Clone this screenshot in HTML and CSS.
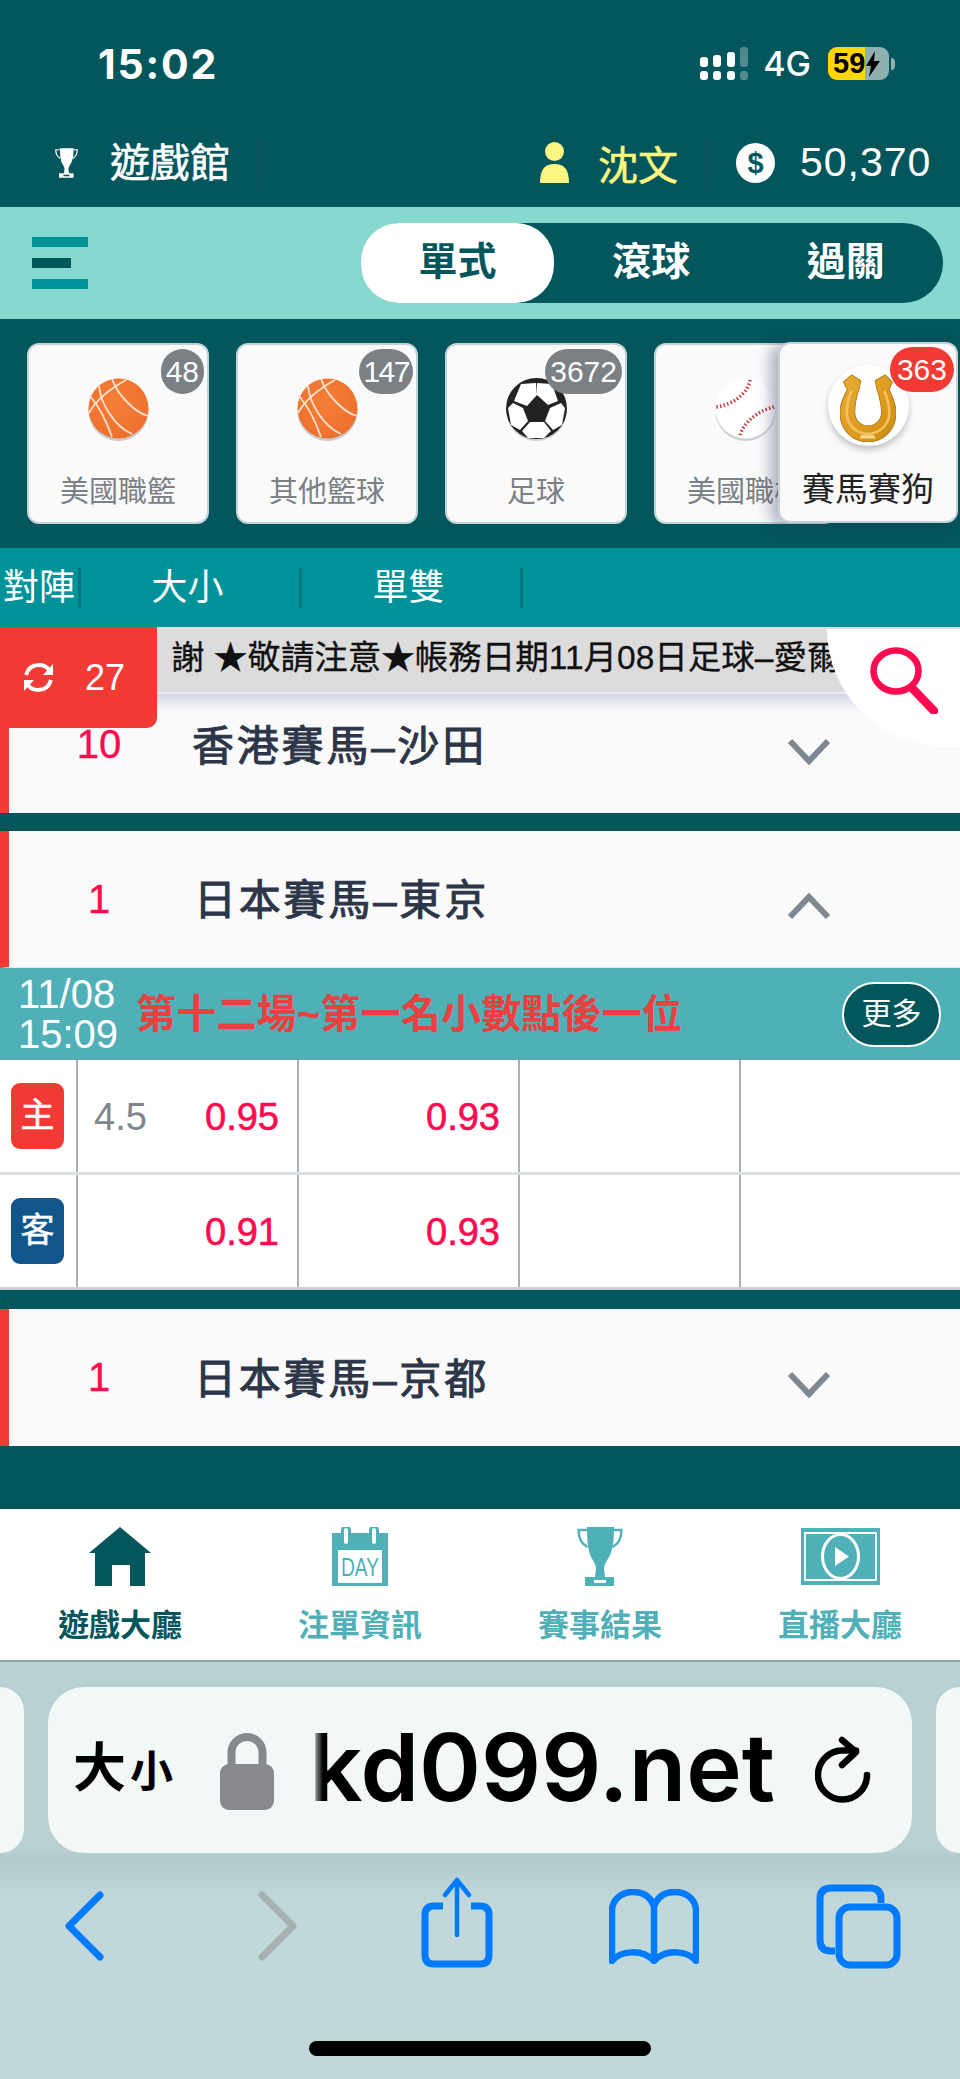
FILE: index.html
```html
<!DOCTYPE html>
<html lang="zh-Hant">
<head>
    <meta charset="UTF-8">
    <meta name="viewport" content="width=device-width, initial-scale=1.0">
    <title>遊戲館</title>
    <link rel="stylesheet" href="styles.css">
</head>
<body>
    <svg class="defs" width="0" height="0">
        <defs>
            <radialGradient id="orange" cx="45%" cy="40%" r="65%">
                <stop offset="0" stop-color="#f58038"/>
                <stop offset="1" stop-color="#ed6f2c"/>
            </radialGradient>
            <linearGradient id="gold" x1="0" y1="0" x2="1" y2="1">
                <stop offset="0" stop-color="#e9ad3a"/>
                <stop offset=".6" stop-color="#dc9a1e"/>
                <stop offset="1" stop-color="#c98912"/>
            </linearGradient>
            <symbol id="basketball" viewBox="0 0 61 64">
                <ellipse cx="30.5" cy="33" rx="30" ry="30" fill="#8d9296" opacity=".45"/>
                <circle cx="30.5" cy="30.5" r="30" fill="url(#orange)"/>
                <g fill="none" stroke="#fbe3d3" stroke-width="1.8">
                    <path d="M24 1c6 17 24 34 36 37"/>
                    <path d="M2 18c8 9 16 24 22 41"/>
                    <path d="M38 2C20 12 8 22 1 35"/>
                    <path d="M11 8c2 18 15 40 33 48"/>
                </g>
            </symbol>
            <symbol id="cup" viewBox="0 0 46 59">
                <path fill-rule="evenodd" d="M10 0h27c0 14-1 23-5 30-3 5-5 8-5 12l1 8h9v9H8v-9h10l1-8c0-4-2-7-5-12C11 23 10 14 10 0zM17 53v3h12v-3z"/>
                <path fill="none" stroke="currentColor" stroke-width="2.4" d="M10 3H1.5c0 9 3 14 9 17M36 3h8.5c0 9-3 14-9 17"/>
            </symbol>
        </defs>
    </svg>

    <!-- 狀態列 -->
    <div class="status-bar">
        <span class="clock">15:02</span>
        <div class="status-right">
            <svg class="signal" width="48" height="33" viewBox="0 0 48 33">
                <g fill="#fff">
                    <rect x="0" y="10" width="8" height="10" rx="3"/>
                    <rect x="0" y="24" width="8" height="9" rx="3"/>
                    <rect x="13" y="8" width="8" height="12" rx="3"/>
                    <rect x="13" y="24" width="8" height="9" rx="3"/>
                    <rect x="27" y="5" width="8" height="15" rx="3"/>
                    <rect x="27" y="24" width="8" height="9" rx="3"/>
                </g>
                <g fill="#fff" opacity=".3">
                    <rect x="40" y="0" width="8" height="20" rx="3"/>
                    <rect x="40" y="24" width="8" height="9" rx="3"/>
                </g>
            </svg>
            <span class="net">4G</span>
            <div class="battery">
                <span>59</span>
                <svg width="14" height="26" viewBox="0 0 14 26"><path d="M9 0 0 15h5l-2 11 11-16H8z"/></svg>
            </div>
            <i class="battery-nub"></i>
        </div>
    </div>

    <!-- 會員列 -->
    <div class="user-bar">
        <svg class="hall-icon" width="23" height="30"><use href="#cup"/></svg>
        <span class="hall-name">遊戲館</span>
        <i class="bar-line"></i>
        <svg class="person" width="29" height="41" viewBox="0 0 29 41">
            <ellipse cx="14.5" cy="9.5" rx="9.5" ry="9.5"/>
            <path d="M0 41c0-14 5-19 14.5-19S29 27 29 41z"/>
        </svg>
        <span class="user-name">沈文</span>
        <i class="bar-line line-money"></i>
        <span class="coin">$</span>
        <span class="money">50,370</span>
    </div>

    <!-- 玩法切換 -->
    <div class="mode-bar">
        <div class="burger"><i></i><i class="short"></i><i></i></div>
        <div class="mode-tabs">
            <span class="mode-tab active">單式</span>
            <span class="mode-tab">滾球</span>
            <span class="mode-tab">過關</span>
        </div>
    </div>

    <!-- 球種 -->
    <div class="sports">
        <div class="sport-card">
            <span class="count">48</span>
            <svg class="ball" width="61" height="64"><use href="#basketball"/></svg>
            <span class="sport-name">美國職籃</span>
        </div>
        <div class="sport-card">
            <span class="count tight">147</span>
            <svg class="ball" width="61" height="64"><use href="#basketball"/></svg>
            <span class="sport-name">其他籃球</span>
        </div>
        <div class="sport-card">
            <svg class="ball" width="61" height="64" viewBox="0 0 61 64">
                <ellipse cx="30.5" cy="33" rx="30" ry="30" fill="#8d9296" opacity=".4"/>
                <circle cx="30.5" cy="30.5" r="30.5" fill="#222"/>
                <g fill="#fff">
                    <path d="M15 6l15-1 1 12-10 11-13-5z"/>
                    <path d="M31 5l15 1 6 17-10 4-11-10z"/>
                    <path d="M17 30l5 13-8 9-9-5-3-17 5-5z"/>
                    <path d="M44 30l11-5 4 5-3 17-9 5-8-9z"/>
                    <path d="M24 44h14l7 9-7 7H22l-6-7z"/>
                </g>
            </svg>
            <span class="count">3672</span>
            <span class="sport-name">足球</span>
        </div>
        <div class="sport-card">
            <svg class="ball" width="61" height="64" viewBox="0 0 61 64">
                <ellipse cx="30.5" cy="33" rx="30" ry="30" fill="#8d9296" opacity=".4"/>
                <circle cx="30.5" cy="30.5" r="30" fill="#fff"/>
                <g fill="none" stroke="#c8363f" stroke-width="3.5" stroke-dasharray="1.5 2.2">
                    <path d="M35 2C33 15 18 27 1 29"/>
                    <path d="M59 29C42 33 28 45 25 58"/>
                </g>
            </svg>
            <span class="sport-name">美國職棒</span>
        </div>
    </div>

    <div class="sport-card pinned">
        <span class="count hot">363</span>
        <div class="shoe-round">
            <svg width="56" height="68" viewBox="0 0 167 202">
                <path fill="url(#gold)" stroke="#b87d12" stroke-width="3" d="M35 2 62 20 57 44C48 70 44 90 44 112 44 138 62 154 83 154 106 154 124 138 124 112 124 90 118 70 110 44L105 20 135 2 156 24 146 46C158 70 167 90 167 115 167 165 130 202 83 202 38 202 0 165 0 115 0 90 10 70 22 46L10 24z"/>
                <path fill="none" stroke="#f2c25e" stroke-width="8" d="M34 50C24 74 20 92 20 115 20 150 48 178 83 178 118 178 147 150 147 115 147 92 142 74 132 50"/>
                <path fill="#f7d98c" d="M62 182h40l4 10H60z"/>
            </svg>
        </div>
        <span class="sport-name">賽馬賽狗</span>
    </div>

    <!-- 欄位標題 -->
    <div class="col-head">
        <span class="col-a">對陣</span>
        <span class="col-b">大小</span>
        <span class="col-b">單雙</span>
    </div>

    <!-- 跑馬燈 -->
    <div class="notice">謝 ★敬請注意★帳務日期11月08日足球–愛爾</div>
    <div class="refresh">
        <svg width="31" height="31" viewBox="0 0 31 31" fill="none" stroke="#fff" stroke-width="4">
            <path d="M3 13C5 6 10 3 16 3c4 0 8 2 10 5"/>
            <path d="M28 18c-2 7-7 10-13 10-4 0-8-2-10-5"/>
            <path fill="#fff" stroke="none" d="M30 2v11H20zM1 29V18h10z"/>
        </svg>
        <span>27</span>
    </div>
    <div class="search">
        <svg width="68" height="67" viewBox="0 0 68 67" fill="none" stroke="#ff0a50" stroke-linecap="round">
            <ellipse cx="26" cy="24" rx="22.5" ry="20.5" stroke-width="6.5"/>
            <path d="M42 41l22 23" stroke-width="8.5"/>
        </svg>
    </div>

    <!-- 賽事列表 -->
    <div class="league first">
        <span class="league-num">10</span>
        <span class="league-title">香港賽馬–沙田</span>
        <svg class="chevron" width="44" height="27" viewBox="0 0 44 27"><path d="M3 3l19 20L41 3"/></svg>
    </div>
    <div class="league open">
        <span class="league-num">1</span>
        <span class="league-title">日本賽馬–東京</span>
        <svg class="chevron" width="44" height="27" viewBox="0 0 44 27"><path d="M3 24 22 4l19 20"/></svg>
    </div>

    <div class="match-head">
        <div class="match-time">11/08<br>15:09</div>
        <div class="match-title">第十二場~第一名小數點後一位</div>
        <span class="more">更多</span>
    </div>
    <div class="odds-row">
        <div class="side"><span class="side-tag home">主</span></div>
        <div class="odds-cell"><span class="line">4.5</span><span class="odd">0.95</span></div>
        <div class="odds-cell"><span class="odd">0.93</span></div>
        <div class="odds-cell"></div>
        <div class="odds-cell"></div>
    </div>
    <div class="odds-row">
        <div class="side"><span class="side-tag away">客</span></div>
        <div class="odds-cell"><span class="odd">0.91</span></div>
        <div class="odds-cell"><span class="odd">0.93</span></div>
        <div class="odds-cell"></div>
        <div class="odds-cell"></div>
    </div>

    <div class="league last">
        <span class="league-num">1</span>
        <span class="league-title">日本賽馬–京都</span>
        <svg class="chevron" width="44" height="27" viewBox="0 0 44 27"><path d="M3 3l19 20L41 3"/></svg>
    </div>
    <div class="list-end"></div>

    <!-- 底部選單 -->
    <div class="tabbar">
        <div class="tabbar-item current">
            <svg width="62" height="59" viewBox="0 0 62 59"><path d="M31 0l31 26h-6v33H41V38H23v21H6V26H0z"/></svg>
            <span>遊戲大廳</span>
        </div>
        <div class="tabbar-item">
            <svg width="56" height="59" viewBox="0 0 56 59">
                <path d="M0 6h9V3a5 5 0 0 1 10 0v3h18V3a5 5 0 0 1 10 0v3h9v53H0zM6 23v33h44V23zM12 3v12a2 2 0 0 0 4 0V3a2 2 0 0 0-4 0zM40 3v12a2 2 0 0 0 4 0V3a2 2 0 0 0-4 0z" fill-rule="evenodd"/>
                <text x="9" y="49" textLength="38" lengthAdjust="spacingAndGlyphs" class="day">DAY</text>
            </svg>
            <span>注單資訊</span>
        </div>
        <div class="tabbar-item">
            <svg width="46" height="59"><use href="#cup"/></svg>
            <span>賽事結果</span>
        </div>
        <div class="tabbar-item">
            <svg width="79" height="59" viewBox="0 0 79 59">
                <rect y="1" width="79" height="57"/>
                <path fill="none" stroke="#fff" stroke-width="1.8" d="M4 6h71v47H4z"/>
                <ellipse cx="39.5" cy="29.5" rx="18" ry="22" fill="#50b0b8" stroke="#fff" stroke-width="3"/>
                <path fill="#fff" d="M34 20l14 9.5L34 39z"/>
            </svg>
            <span>直播大廳</span>
        </div>
    </div>

    <!-- 瀏覽器工具列 -->
    <div class="browser">
        <div class="url-row">
            <i class="side-pill left"></i>
            <div class="url-pill">
                <span class="aa">大<small>小</small></span>
                <svg class="lock" width="54" height="77" viewBox="0 0 54 77">
                    <path fill="none" stroke="#88898c" stroke-width="8" d="M11.5 34V19.5a15.5 15.5 0 0 1 31 0V34"/>
                    <rect y="31" width="54" height="46" rx="9" fill="#88898c"/>
                </svg>
                <span class="domain">kd099.net</span>
                <i class="domain-fade"></i>
                <svg class="reload" width="56" height="68" viewBox="0 0 56 68" fill="none" stroke="#000" stroke-width="6.5" stroke-linecap="round" stroke-linejoin="round">
                    <path d="M52 39A24.5 24.5 0 1 1 27 14.5H41"/>
                    <path d="M27 4l14 12-14 13"/>
                </svg>
            </div>
            <i class="side-pill right"></i>
        </div>
        <div class="nav-row">
            <svg class="nav-back" width="41" height="70" viewBox="0 0 41 70" fill="none" stroke="#007aff" stroke-width="7" stroke-linecap="round" stroke-linejoin="round"><path d="M36 4 5 35l31 31"/></svg>
            <svg class="nav-fwd" width="41" height="70" viewBox="0 0 41 70" fill="none" stroke="#a5b1b1" stroke-width="7" stroke-linecap="round" stroke-linejoin="round"><path d="M5 4l31 31L5 66"/></svg>
            <svg class="nav-share" width="72" height="91" viewBox="0 0 72 91" fill="none" stroke="#007aff" stroke-width="7">
                <path d="M22 29H13Q4 29 4 38v40q0 9 9 9h46q9 0 9-9V38q0-9-9-9h-9"/>
                <path stroke-width="4.5" stroke-linecap="round" stroke-linejoin="round" d="M36 58V3M24 18 36 3l12 15"/>
            </svg>
            <svg class="nav-book" width="90" height="75" viewBox="0 0 90 75" fill="none" stroke="#007aff" stroke-width="6.5" stroke-linejoin="round">
                <path d="M45 18C42 8 35 3 24 3 12 3 3 11 3 22v50c8-10 30-13 42 0 12-13 34-10 42 0V22C87 11 78 3 66 3 55 3 48 8 45 18zM45 18v50"/>
            </svg>
            <svg class="nav-tabs" width="85" height="85" viewBox="0 0 85 85" fill="none" stroke="#007aff" stroke-width="7">
                <path d="M65 19v-4q0-11-11-11H15Q4 4 4 15v41q0 11 11 11h4"/>
                <rect x="23" y="23" width="58" height="58" rx="11"/>
            </svg>
        </div>
        <div class="home-bar"></div>
    </div>
</body>
</html>
```

FILE: styles.css
```css
html, body {
    margin: 0;
    padding: 0;
}
body {
    position: relative;
    width: 960px;
    height: 2079px;
    overflow: hidden;
    font-family: "Liberation Sans", "Noto Sans CJK TC", sans-serif;
    background-color: #03565b;
    color: #fff;
}
.defs {
    position: absolute;
}

/* status bar */
.status-bar {
    height: 118px;
    display: flex;
    justify-content: space-between;
    align-items: flex-start;
    box-sizing: border-box;
    padding: 47px 65px 0 98px;
}
.clock {
    font-family: Inter, "Liberation Sans", sans-serif;
    font-size: 41px;
    font-weight: 700;
    letter-spacing: 1.8px;
    line-height: 34px;
}
.status-right {
    display: flex;
    align-items: center;
    height: 33px;
}
.net {
    margin-left: 15px;
    font-family: Inter, "Liberation Sans", sans-serif;
    font-size: 34px;
    font-weight: 500;
}
.battery {
    margin-left: 17px;
    width: 61px;
    height: 33px;
    border-radius: 9px;
    background: linear-gradient(90deg, #ffd60a 60%, #8fb0ae 60%);
    color: #000;
    display: flex;
    align-items: center;
    padding-left: 5px;
    box-sizing: border-box;
    font-size: 29px;
    font-weight: bold;
}
.battery svg {
    margin-left: 1px;
}
.battery-nub {
    width: 4px;
    height: 12px;
    margin-left: 2px;
    border-radius: 0 4px 4px 0;
    background-color: #8fb0ae;
}

/* user bar */
.user-bar {
    height: 89px;
    display: flex;
    align-items: center;
    font-size: 40px;
}
.hall-icon {
    margin-left: 55px;
    fill: #fff;
    color: #fff;
}
.hall-name {
    margin-left: 32px;
    line-height: 44px;
    -webkit-text-stroke: .6px #fff;
}
.bar-line {
    width: 2px;
    height: 44px;
    margin-left: 28px;
    background-color: #1f4a55;
}
.person {
    margin-left: 280px;
    fill: #fdf680;
}
.user-name {
    margin-left: 29px;
    color: #fdf680;
    -webkit-text-stroke: .6px #fdf680;
}
.line-money {
    margin-left: 28px;
}
.coin {
    margin-left: 28px;
    width: 39px;
    height: 40px;
    border-radius: 50%;
    background-color: #fff;
    color: #03565b;
    font-size: 29px;
    font-weight: bold;
    line-height: 40px;
    text-align: center;
}
.money {
    margin-left: 25px;
    font-size: 41px;
    letter-spacing: 1px;
}

/* mode bar */
.mode-bar {
    height: 112px;
    display: flex;
    align-items: center;
    justify-content: space-between;
    box-sizing: border-box;
    padding: 0 17px 0 32px;
    background-color: #85d9ce;
}
.burger {
    width: 56px;
    display: flex;
    flex-direction: column;
    gap: 11px;
}
.burger i {
    height: 10px;
    background-color: #009299;
}
.burger i.short {
    width: 39px;
    background-color: #03565b;
}
.mode-tabs {
    width: 582px;
    height: 80px;
    display: flex;
    border-radius: 40px;
    background-color: #03565b;
}
.mode-tab {
    flex: 1;
    text-align: center;
    font-size: 39px;
    font-weight: bold;
    line-height: 78px;
}
.mode-tab.active {
    flex: none;
    width: 193px;
    border-radius: 38px;
    background-color: #fff;
    color: #03565b;
}

/* sport cards */
.sports {
    height: 229px;
    display: flex;
    gap: 27px;
    box-sizing: border-box;
    padding: 24px 0 0 27px;
    overflow: hidden;
}
.sport-card {
    position: relative;
    flex: none;
    width: 182px;
    height: 181px;
    box-sizing: border-box;
    padding-top: 33px;
    border: 2px solid #c5d3d8;
    border-radius: 12px;
    background-color: #fafafa;
    display: flex;
    flex-direction: column;
    align-items: center;
}
.sport-name {
    margin-top: 31px;
    font-size: 29px;
    line-height: 38px;
    color: #7b8085;
}
.count {
    position: absolute;
    top: 4px;
    right: 3px;
    min-width: 24px;
    height: 45px;
    padding: 0 5px;
    border-radius: 23px;
    background-color: #7b8085;
    color: #fff;
    font-size: 30px;
    line-height: 45px;
    text-align: center;
    white-space: nowrap;
}
.count.tight {
    letter-spacing: -1.5px;
    padding: 0 4px;
}
.count.hot {
    background-color: #f23a34;
    right: 2px;
    top: 3px;
    padding: 0 7px;
}
.pinned {
    position: absolute;
    top: 342px;
    left: 778px;
    width: 180px;
    padding-top: 21px;
    box-shadow: -8px 2px 14px rgba(40, 50, 90, .35);
}
.shoe-round {
    width: 81px;
    height: 81px;
    border-radius: 50%;
    background-color: #fff;
    box-shadow: 0 4px 6px rgba(120, 130, 140, .45);
    display: flex;
    align-items: center;
    justify-content: center;
}
.shoe-round svg {
    margin-top: 5px;
}
.pinned .sport-name {
    margin-top: 22px;
    font-size: 33px;
    line-height: 44px;
    color: #222;
}

/* column heads */
.col-head {
    height: 79px;
    display: flex;
    align-items: center;
    background-color: #009299;
    font-size: 36px;
}
.col-a, .col-b {
    height: 40px;
    line-height: 40px;
    border-right: 3px solid #03767d;
    text-align: center;
}
.col-a {
    width: 78px;
    white-space: nowrap;
}
.col-b {
    width: 213px;
    padding-right: 5px;
}

/* notice + overlays */
.notice {
    position: relative;
    z-index: 2;
    height: 67px;
    box-sizing: border-box;
    padding-left: 171px;
    background-color: #dcdcdc;
    border-bottom: 2px solid #ececec;
    box-shadow: 0 6px 14px rgba(110, 120, 170, .35);
    color: #111;
    font-size: 33.5px;
    line-height: 62px;
    white-space: nowrap;
    -webkit-text-stroke: .3px #111;
}
.refresh {
    position: absolute;
    z-index: 3;
    top: 627px;
    left: 0;
    width: 157px;
    height: 101px;
    box-sizing: border-box;
    padding: 35px 0 0 23px;
    display: flex;
    gap: 31px;
    border-radius: 0 0 10px 0;
    background-color: #f23a34;
    font-size: 36px;
    line-height: 31px;
}
.search {
    position: absolute;
    z-index: 3;
    top: 629px;
    left: 827px;
    width: 133px;
    height: 117px;
    box-sizing: border-box;
    padding: 18px 0 0 43px;
    border-radius: 0 0 0 120px;
    background-color: #fff;
}

/* league rows */
.league {
    height: 137px;
    display: flex;
    align-items: center;
    box-sizing: border-box;
    border-left: 9px solid #f23a34;
    background-color: #fafafa;
    color: #2c3648;
}
.league.first {
    margin-top: -18px;
    margin-bottom: 18px;
}
.league-num {
    width: 180px;
    text-align: center;
    font-size: 40px;
    color: #ff0a50;
    -webkit-text-stroke: .4px #ff0a50;
}
.league-title {
    margin: 0 0 5px 5px;
    font-size: 42px;
    letter-spacing: 2.8px;
    -webkit-text-stroke: 1px #2c3648;
}
.league.first .league-title {
    margin-left: 3px;
}
.chevron {
    margin-left: auto;
    margin-top: 14px;
    margin-right: 129px;
    fill: none;
    stroke: #7f8790;
    stroke-width: 6;
}
.league.open {
    border-bottom: 1px solid #e6e6e6;
}

/* match */
.match-head {
    height: 92px;
    display: flex;
    align-items: center;
    background-color: #50b0b8;
}
.match-time {
    width: 136px;
    box-sizing: border-box;
    padding-left: 18px;
    font-size: 40px;
    line-height: 40px;
}
.match-title {
    font-size: 40px;
    font-weight: bold;
    letter-spacing: .2px;
    line-height: 44px;
    color: #ea4040;
    white-space: nowrap;
}
.more {
    margin-left: auto;
    margin-right: 19px;
    width: 99px;
    height: 65px;
    box-sizing: border-box;
    border: 2px solid #fff;
    border-radius: 33px;
    background-color: #03565b;
    font-size: 30px;
    line-height: 60px;
    text-align: center;
}
.odds-row {
    height: 115px;
    display: grid;
    grid-template-columns: 76px repeat(4, 221px);
    background-color: #fff;
    border-bottom: 3px solid #dde0e3;
    box-sizing: border-box;
}
.odds-row + .odds-row {
    border-bottom-color: #c9d0d4;
}
.side {
    display: flex;
    align-items: center;
    padding-left: 11px;
}
.side-tag {
    width: 53px;
    height: 66px;
    border-radius: 9px;
    font-size: 34px;
    line-height: 64px;
    text-align: center;
    -webkit-text-stroke: .5px #fff;
}
.side-tag.home {
    background-color: #f23a34;
}
.side-tag.away {
    background-color: #11568a;
}
.odds-cell {
    display: flex;
    align-items: center;
    justify-content: flex-end;
    box-sizing: border-box;
    padding: 3px 18px 0 0;
    border-left: 2px solid #aab0b4;
    font-size: 38px;
}
.line {
    margin-right: auto;
    margin-left: 16px;
    color: #80868c;
}
.odd {
    color: #ff0a50;
    -webkit-text-stroke: .6px #ff0a50;
}
.league.last {
    margin-top: 19px;
}
.list-end {
    height: 63px;
}

/* bottom menu */
.tabbar {
    height: 153px;
    display: grid;
    grid-template-columns: repeat(4, 1fr);
    box-sizing: border-box;
    padding-top: 18px;
    background-color: #fff;
    border-bottom: 2px solid #8eaaac;
    color: #50b0b8;
    fill: #50b0b8;
}
.tabbar-item {
    display: flex;
    flex-direction: column;
    align-items: center;
    font-size: 31px;
    font-weight: bold;
    line-height: 40px;
}
.tabbar-item svg {
    height: 59px;
}
.tabbar-item span {
    margin-top: 20px;
}
.tabbar-item.current {
    color: #03565b;
    fill: #03565b;
}
.day {
    font-size: 25px;
    font-weight: normal;
}

/* browser chrome */
.browser {
    height: 417px;
    background: linear-gradient(180deg, #b9d0d2 0, #b9d0d2 190px, #b2cacc 195px, #c1d8da 240px, #c1d8da 100%);
}
.url-row {
    display: flex;
    justify-content: space-between;
    padding-top: 25px;
}
.side-pill {
    width: 24px;
    height: 166px;
    background-color: #f2f7f8;
}
.side-pill.left {
    border-radius: 0 30px 30px 0;
}
.side-pill.right {
    border-radius: 30px 0 0 30px;
}
.url-pill {
    position: relative;
    width: 864px;
    height: 166px;
    border-radius: 36px;
    background-color: #f2f7f8;
    color: #000;
    display: flex;
    align-items: center;
}
.aa {
    margin-left: 25px;
    width: 147px;
    font-size: 53px;
    font-weight: bold;
    line-height: 60px;
    white-space: nowrap;
}
.aa small {
    margin-left: 4px;
    font-size: 43px;
}
.lock {
    margin-top: 2px;
}
.domain {
    margin: 0 0 6px 35px;
    font-family: Inter, "Liberation Sans", sans-serif;
    font-size: 94px;
    font-weight: 600;
    line-height: 100px;
}
.domain-fade {
    position: absolute;
    top: 30px;
    left: 261px;
    width: 14px;
    height: 100px;
    background: linear-gradient(90deg, #f2f7f8 10%, rgba(242, 247, 248, 0) 100%);
}
.reload {
    margin: 0 41px 0 auto;
}
.nav-row {
    position: relative;
    height: 92px;
    margin-top: 23px;
    display: flex;
    align-items: flex-end;
    padding-left: 64px;
}
.nav-back {
    margin-bottom: 7px;
}
.nav-fwd {
    margin-left: 152px;
    margin-bottom: 7px;
}
.nav-share {
    margin-left: 123px;
}
.nav-book {
    margin-left: 116px;
    margin-bottom: 4px;
}
.nav-tabs {
    margin-left: 117px;
    margin-bottom: -1px;
}
.home-bar {
    width: 342px;
    height: 15px;
    margin: 73px 0 0 309px;
    border-radius: 8px;
    background-color: #000;
}
```
